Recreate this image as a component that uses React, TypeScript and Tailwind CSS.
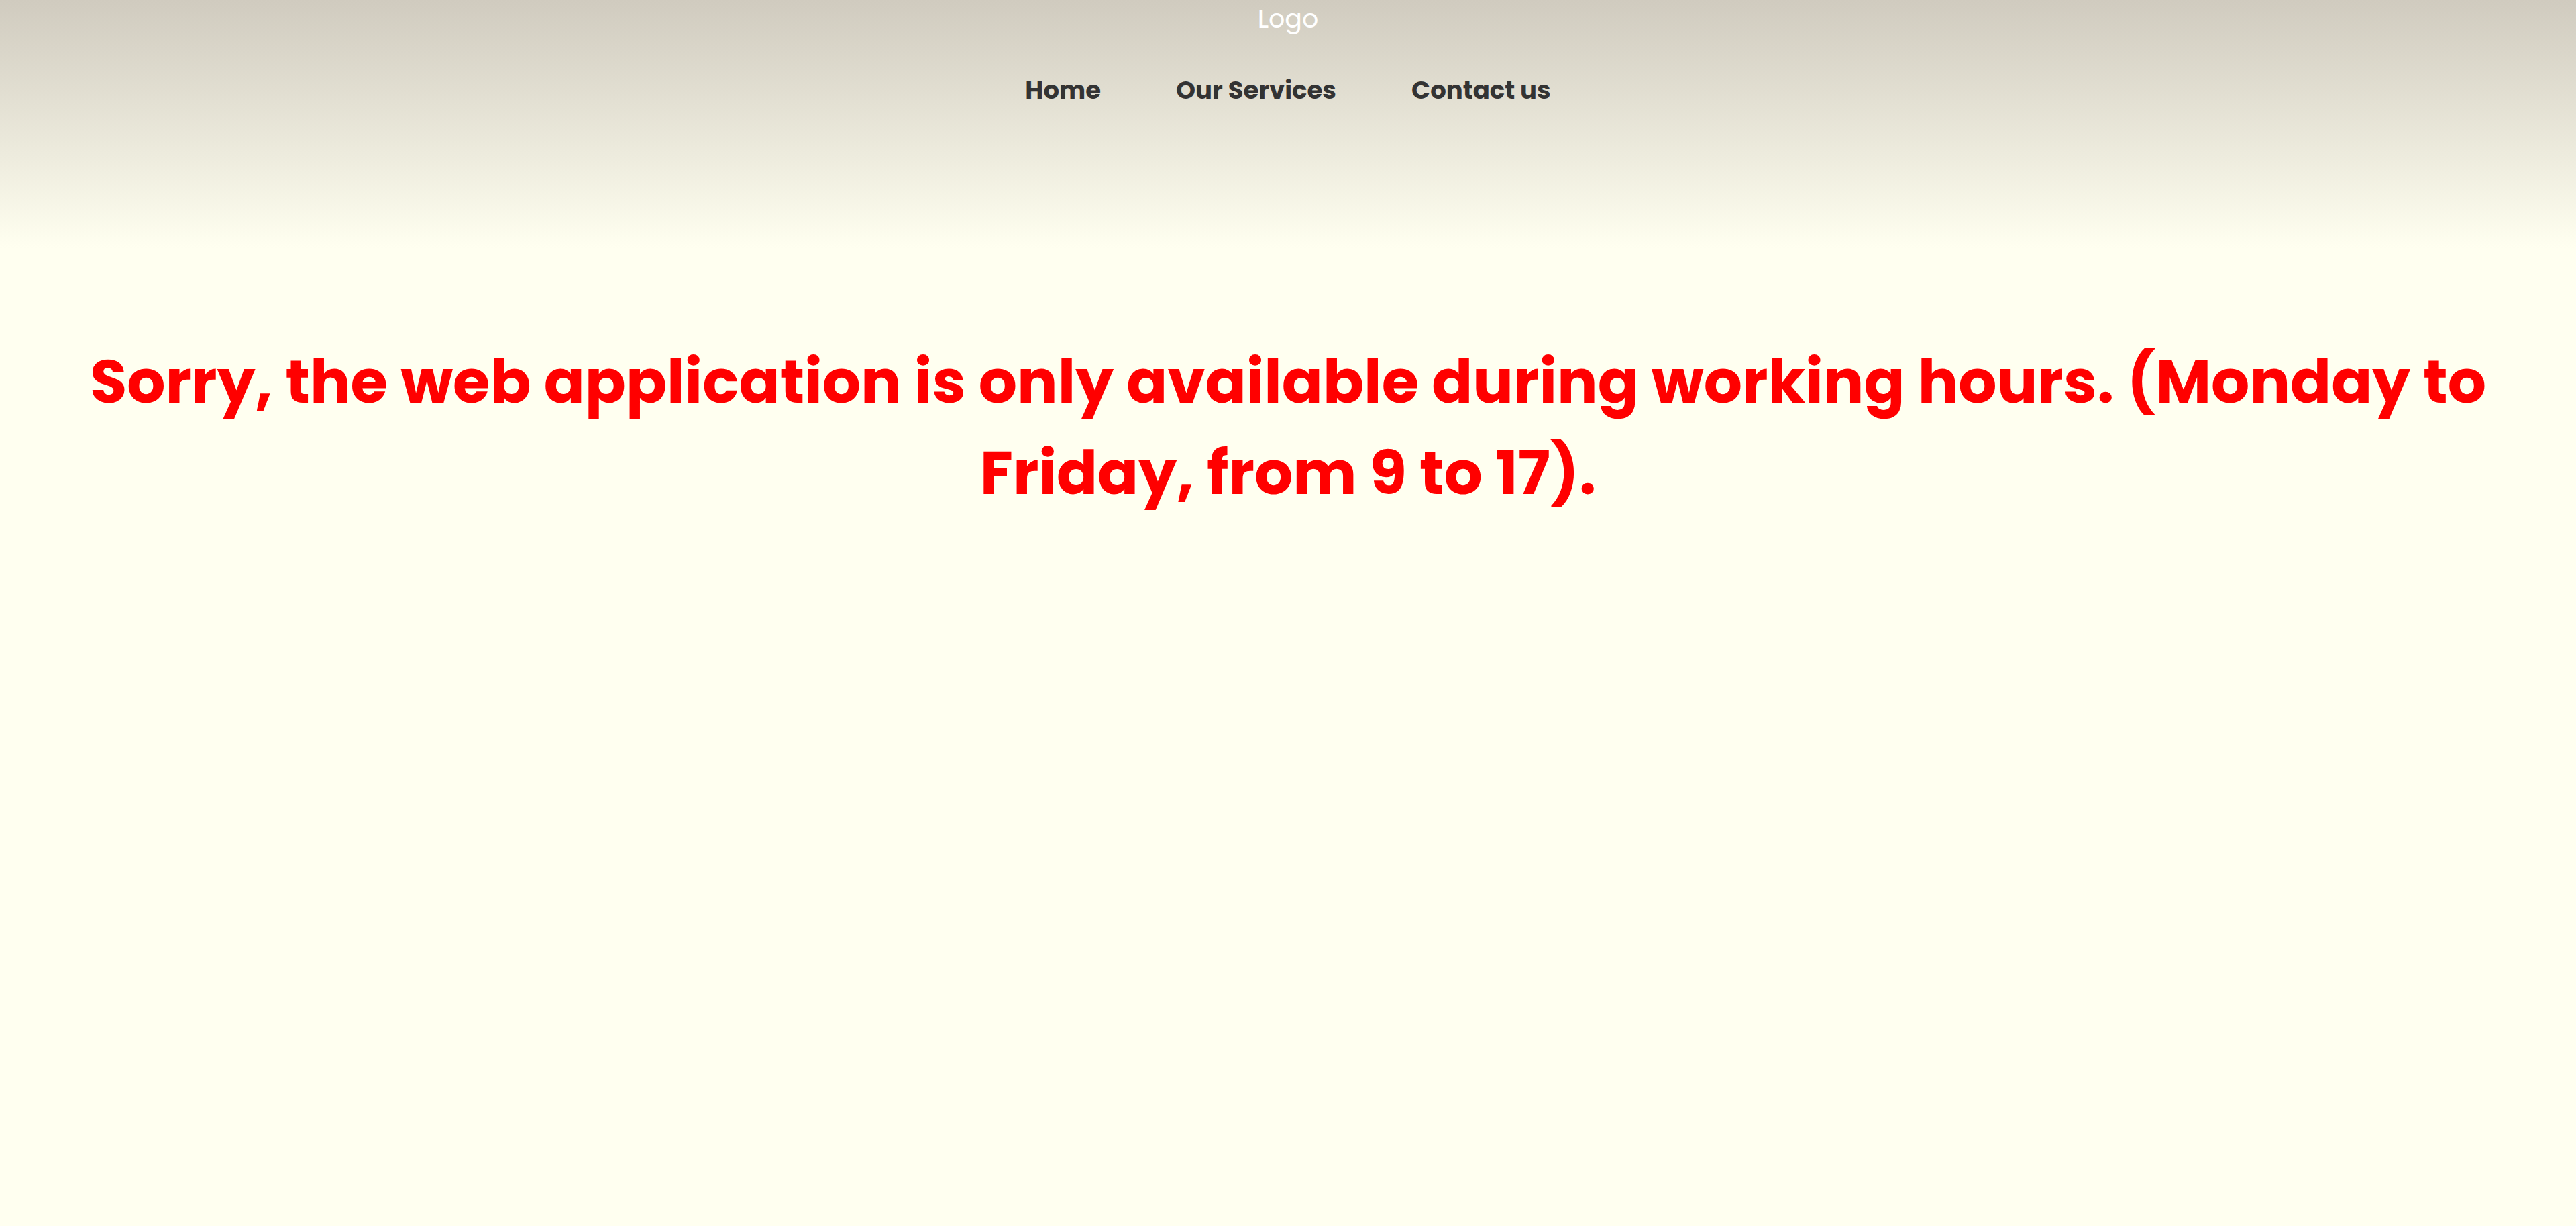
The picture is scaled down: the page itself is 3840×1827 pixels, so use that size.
const links = [
  { label: 'Home', href: '#home' },
  { label: 'Our Services', href: '#services' },
  { label: 'Contact us', href: '#contact' },
];

export default function App() {
  return (
    <div className="min-h-screen bg-[#fffff0] font-['Poppins','Inter',sans-serif]">
      <header className="flex flex-col items-center bg-linear-to-b from-[#d0cbbf] to-[#fffff0] pb-[206px]">
        <div className="text-[38px] leading-[56px] text-white">Logo</div>
        <nav className="mt-[48px]">
          <ul className="flex gap-[112px] text-[37px] leading-[60px] font-bold text-[#333333]">
            {links.map((link) => (
              <li key={link.label}>
                <a href={link.href}>{link.label}</a>
              </li>
            ))}
          </ul>
        </nav>
      </header>
      <main className="px-[100px] pt-[131px] text-center">
        <h1 className="text-[90px] leading-[136px] font-bold text-[#ff0000]">
          Sorry, the web application is only available during working hours. (Monday to Friday, from 9 to 17).
        </h1>
      </main>
    </div>
  );
}
